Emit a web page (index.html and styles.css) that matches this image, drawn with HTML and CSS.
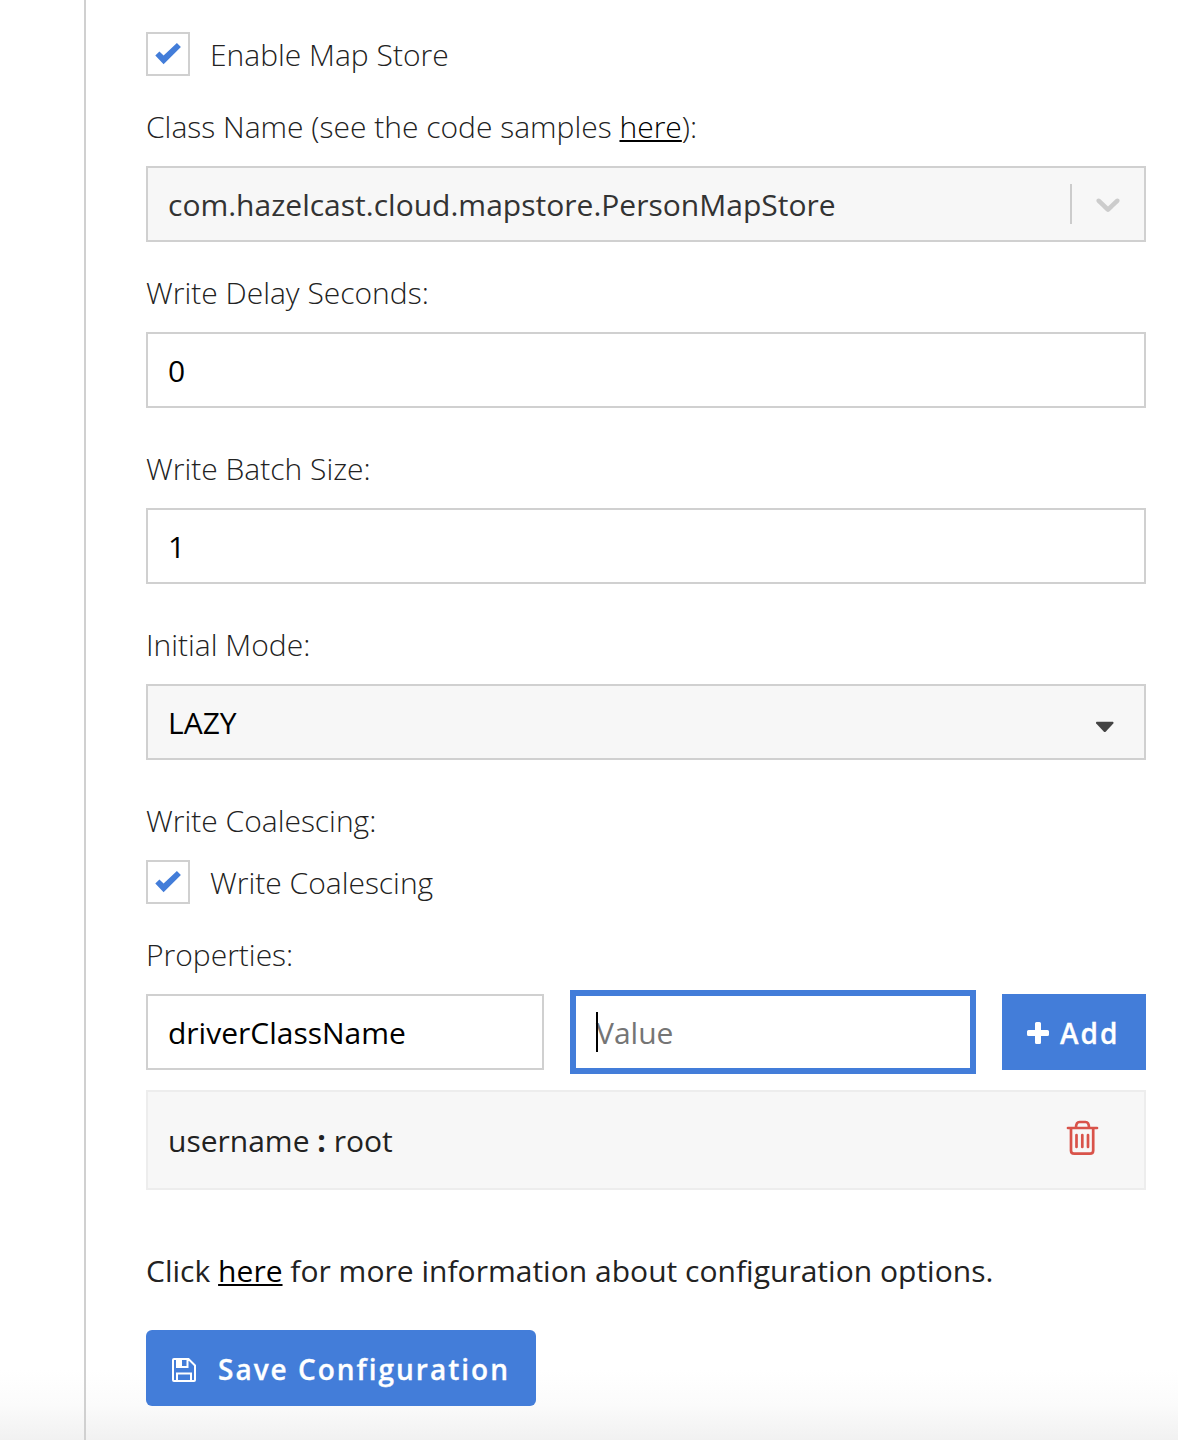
FILE: index.html
```html
<!DOCTYPE html>
<html lang="en">
<head>
<meta charset="utf-8">
<title>Map Store Configuration</title>
<link rel="stylesheet" href="styles.css">
</head>
<body>
<main class="page">
  <form class="panel">
    <label class="check">
      <span class="check-box"><svg width="40" height="40" viewBox="0 0 40 40"><path d="M7.300 21.500 11.400 17.500 15.600 21.500 28.900 8.900 32.900 13.100 15.600 30.200Z"/></svg></span>
      <span class="check-text">Enable Map Store</span>
    </label>

    <div class="group">
      <div class="label">Class Name (see the code samples <a href="#">here</a>):</div>
      <div class="field field-gray">
        <span class="value-dark">com.hazelcast.cloud.mapstore.PersonMapStore</span>
        <span class="divider"></span>
        <svg class="chevron" width="40" height="40" viewBox="0 0 20 20"><path d="M4.516 7.548c0.436-0.446 1.043-0.481 1.576 0l3.908 3.747 3.908-3.747c0.533-0.481 1.141-0.446 1.574 0 0.436 0.445 0.408 1.197 0 1.615-0.406 0.418-4.695 4.502-4.695 4.502-0.217 0.223-0.502 0.335-0.787 0.335s-0.57-0.112-0.789-0.335c0 0-4.287-4.084-4.695-4.502s-0.436-1.17 0-1.615z"/></svg>
      </div>
    </div>

    <div class="group">
      <div class="label">Write Delay Seconds:</div>
      <div class="field"><span>0</span></div>
    </div>

    <div class="group group-wide">
      <div class="label">Write Batch Size:</div>
      <div class="field"><span>1</span></div>
    </div>

    <div class="group group-wide">
      <div class="label">Initial Mode:</div>
      <div class="field field-gray">
        <span>LAZY</span>
        <svg class="caret" width="20" height="12" viewBox="0 0 20 12"><path d="M1.6.8H17.9Q19 1.4 18.3 2.6L10.9 10.6Q9.8 11.6 8.7 10.6L1.2 2.6Q.5 1.4 1.6.8Z"/></svg>
      </div>
    </div>

    <div class="group group-wide">
      <div class="label">Write Coalescing:</div>
      <label class="check">
        <span class="check-box"><svg width="40" height="40" viewBox="0 0 40 40"><path d="M7.300 21.500 11.400 17.500 15.600 21.500 28.900 8.900 32.900 13.100 15.600 30.200Z"/></svg></span>
        <span class="check-text">Write Coalescing</span>
      </label>
    </div>

    <div class="group">
      <div class="label">Properties:</div>
      <div class="prop-row">
        <div class="field key"><span>driverClassName</span></div>
        <div class="field value"><span class="placeholder">Value</span></div>
        <button class="add" type="button">
          <svg width="22" height="22" viewBox="0 0 22 22"><path d="M9.5 0h3q1.500 0 1.500 1.500V8h6.500q1.500 0 1.500 1.500v3q0 1.500-1.500 1.500H14v6.500q0 1.500-1.500 1.500h-3q-1.500 0-1.500-1.500V14H1.500Q0 14 0 12.500v-3Q0 8 1.500 8H8V1.500Q8 0 9.500 0Z"/></svg>
          <span>Add</span>
        </button>
      </div>
      <div class="prop-item">
        <span>username <b>:</b> root</span>
        <svg class="trash" width="32" height="36" viewBox="0 0 32 36"><path d="M2 8H31M5 8V30.500Q5 33.700 8.200 33.700H24Q27.200 33.700 27.200 30.500V8M10 8Q10 2 13.500 2H19.500Q23 2 23 8M10.500 15V27M16.300 15V27M22 15V27"/></svg>
      </div>
    </div>

    <p class="info">Click <a href="#">here</a> for more information about configuration options.</p>

    <button class="save" type="button">
      <svg width="24" height="24" viewBox="0 0 24 24"><path class="line" d="M1 2Q1 1 2 1H16.500L23 7.500V22Q23 23 22 23H2Q1 23 1 22ZM5 23V15.500H19V23M5 1V9H15.500V1"/><path class="solid" d="M5 1H10V9H5Z"/></svg>
      <span>Save Configuration</span>
    </button>
  </form>
</main>
</body>
</html>
```
FILE: styles.css
```css
* { box-sizing: border-box; }

body {
  margin: 0;
  background: #fff;
  color: #222;
  font: 400 30px/40px "Open Sans", "Noto Sans", sans-serif;
}

.page {
  height: 1440px;
  padding-left: 84px;
  overflow: hidden;
  background: linear-gradient(#fff 0, #fff 1370px, #fbfbfb 1405px, #f1f1f1 1440px);
}

.panel {
  height: 1440px;
  padding: 32px 32px 0 60px;
  border-left: 2px solid #d0d0d0;
}

a {
  color: #000;
  text-decoration: underline 2px;
  text-underline-offset: 2px;
  text-decoration-skip-ink: none;
}

.group { margin-top: 30px; }
.group-wide { margin-top: 40px; }

.label {
  height: 60px;
  padding-top: 1px;
  font-weight: 300;
  white-space: nowrap;
}

.check { display: flex; gap: 20px; height: 44px; }
.check-box {
  width: 44px;
  height: 44px;
  border: 2px solid #d0d0d0;
  background: #fff;
}
.check-box svg { display: block; fill: #437dd9; }
.check-text { padding-top: 3px; font-weight: 300; }

.field {
  display: flex;
  align-items: center;
  height: 76px;
  padding: 2px 20px 0;
  border: 2px solid #d0d0d0;
  background: #fff;
  color: #000;
  white-space: nowrap;
}
.field-gray { background: #f7f7f7; }
.value-dark { color: #333; letter-spacing: 0.01px; }
.divider { width: 2px; height: 40px; margin: -2px 16px 0 auto; background: #ccc; }
.chevron { margin: -3px -4px 0 0; fill: #ccc; }
.caret { margin: 7px 9px 0 auto; fill: #444; }

.prop-row { display: flex; align-items: center; height: 76px; }
.key { width: 398px; }
.value {
  width: 406px;
  height: 84px;
  margin: 0 26px;
  border: 6px solid #437dd9;
}
.placeholder { position: relative; color: #757575; }
.placeholder::before {
  content: "";
  position: absolute;
  left: 0;
  top: -1px;
  width: 2px;
  height: 40px;
  background: #000;
}

button {
  display: flex;
  align-items: center;
  height: 76px;
  border: 0;
  background: #437dd9;
  color: #fff;
  font: 600 28px/40px "Open Sans", sans-serif;
  letter-spacing: 2px;
  white-space: nowrap;
  -webkit-text-stroke: 0.3px #fff;
}
button svg { flex: none; fill: #fff; }
.add { width: 144px; padding: 2px 0 0 25px; gap: 11px; }

.prop-item {
  display: flex;
  align-items: center;
  justify-content: space-between;
  height: 100px;
  margin-top: 20px;
  padding: 2px 46px 0 20px;
  border: 2px solid #ededed;
  background: #f7f7f7;
}
.trash { margin-top: -6px; overflow: visible; fill: none; stroke: #d9534a; stroke-width: 2.7; stroke-linecap: round; }

.info { margin: 61px 0 0; height: 79px; letter-spacing: 0.02px; white-space: nowrap; }

.save { width: 390px; padding: 2px 0 0 26px; gap: 22px; border-radius: 6px; }
.save svg { margin-top: 2px; }
.save .line { fill: none; stroke: #fff; stroke-width: 2; }
.save .solid { fill: #fff; }
```
